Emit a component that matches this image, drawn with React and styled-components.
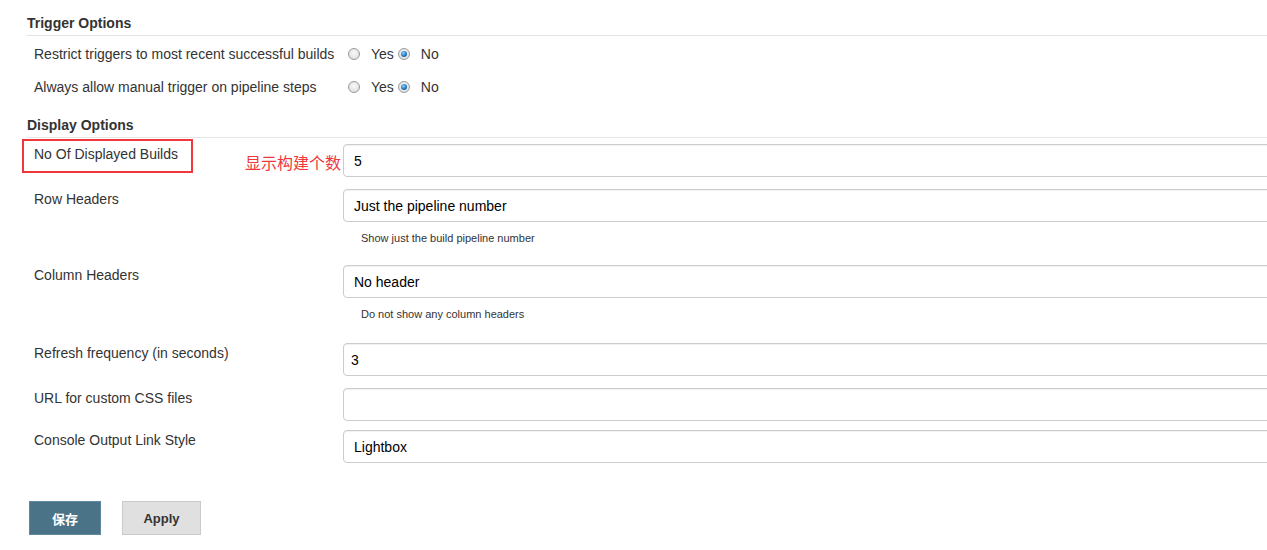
import styled, { createGlobalStyle } from 'styled-components';

const GlobalStyle = createGlobalStyle`
	html, body {
		margin: 0;
		padding: 0;
		background: #fff;
		overflow: hidden;
	}
	body {
		font-family: "Liberation Sans", Arial, sans-serif;
		color: #333;
	}
`;

const Page = styled.div`
	width: 1500px;
	padding-left: 26px;
	box-sizing: border-box;
`;

const SectionTitle = styled.div`
	font-size: 14px;
	font-weight: bold;
	line-height: 16px;
	padding: 15px 0 4px 1px;
	border-bottom: 1px solid #e5e5e5;
	color: #333;
`;

const RadioRow = styled.div`
	display: grid;
	grid-template-columns: 317px auto;
	align-items: center;
	height: 31px;
	padding-top: 2px;
`;

const Label = styled.div`
	position: relative;
	font-size: 14px;
	line-height: 16px;
	padding-left: 8px;
	padding-top: ${({ $top }) => $top || 0}px;
	white-space: nowrap;
`;

const RadioGroup = styled.div`
	display: flex;
	align-items: center;
	padding-left: 5px;
	font-size: 14px;
`;

const Radio = styled.span`
	width: 12px;
	height: 12px;
	border-radius: 50%;
	box-sizing: border-box;
	border: 1px solid #9a9a9a;
	background: radial-gradient(circle at 50% 40%, #fafafa 0%, #e2e2e2 70%, #cfcfcf 100%);
	position: relative;
	margin-right: ${({ $mr }) => $mr}px;

	${({ $checked }) =>
		$checked &&
		`
		&::after {
			content: '';
			position: absolute;
			left: 2px;
			top: 2px;
			width: 6px;
			height: 6px;
			border-radius: 50%;
			background: radial-gradient(circle at 40% 35%, #8fd0ff 0%, #1e79c2 55%, #0b3f74 100%);
		}
	`}
`;

const RadioText = styled.span`
	margin-right: ${({ $mr }) => $mr}px;
`;

const FieldRow = styled.div`
	display: grid;
	grid-template-columns: 317px 1fr;
	align-items: start;
	margin-top: ${({ $mt }) => $mt || 0}px;
`;

const Field = styled.div`
	display: flex;
	flex-direction: column;
`;

const Input = styled.div`
	height: 33px;
	box-sizing: border-box;
	border: 1px solid #ccc;
	border-radius: 4px;
	box-shadow: inset 0 1px 1px rgba(0, 0, 0, 0.06);
	font-size: 14px;
	line-height: 32px;
	padding-left: ${({ $pl }) => $pl || 10}px;
	color: #000;
	background: #fff;
`;

const Help = styled.div`
	font-size: 11px;
	line-height: 16px;
	padding: 8px 0 0 18px;
	margin-bottom: ${({ $mb }) => $mb}px;
	color: #333;
`;

const Highlight = styled.div`
	position: absolute;
	left: -4px;
	top: -5px;
	width: 171px;
	height: 34px;
	box-sizing: border-box;
	border: 2px solid #f0383c;
`;

const Note = styled.span`
	position: absolute;
	right: 2px;
	top: 9px;
	font-family: "Noto Sans CJK SC", sans-serif;
	font-size: 16px;
	line-height: 18px;
	color: #f0383c;
`;

const Buttons = styled.div`
	display: flex;
	gap: 21px;
	margin-top: 38px;
	padding-left: 3px;
`;

const Button = styled.button`
	height: 34px;
	min-width: ${({ $w }) => $w}px;
	box-sizing: border-box;
	font-family: "Liberation Sans", "Noto Sans CJK SC", Arial, sans-serif;
	font-size: 13px;
	font-weight: bold;
	border-radius: 0;
	cursor: pointer;
	border: 1px solid ${({ $primary }) => ($primary ? '#5e88a0' : '#cacaca')};
	background: ${({ $primary }) => ($primary ? '#4b7388' : '#e0e0e0')};
	color: ${({ $primary }) => ($primary ? '#fff' : '#333')};
`;

const fields = [
	{ label: 'Row Headers', value: 'Just the pipeline number', help: 'Show just the build pipeline number', mb: 19, mt: 12 },
	{ label: 'Column Headers', value: 'No header', help: 'Do not show any column headers', mb: 21 },
	{ label: 'Refresh frequency (in seconds)', value: '3', pl: 7 },
	{ label: 'URL for custom CSS files', value: '', mt: 12 },
	{ label: 'Console Output Link Style', value: 'Lightbox', mt: 9 },
];

export default function App() {
	return (
		<Page>
			<GlobalStyle />
			<SectionTitle>Trigger Options</SectionTitle>
			<RadioRow>
				<Label>Restrict triggers to most recent successful builds</Label>
				<RadioGroup>
					<Radio $mr={11} />
					<RadioText $mr={4}>Yes</RadioText>
					<Radio $checked $mr={11} />
					<RadioText>No</RadioText>
				</RadioGroup>
			</RadioRow>
			<RadioRow>
				<Label>Always allow manual trigger on pipeline steps</Label>
				<RadioGroup>
					<Radio $mr={11} />
					<RadioText $mr={4}>Yes</RadioText>
					<Radio $checked $mr={11} />
					<RadioText>No</RadioText>
				</RadioGroup>
			</RadioRow>

			<SectionTitle>Display Options</SectionTitle>
			<FieldRow $mt={6}>
				<Label $top={2}>
					No Of Displayed Builds
					<Highlight />
					<Note>显示构建个数</Note>
				</Label>
				<Field>
					<Input>5</Input>
				</Field>
			</FieldRow>
			{fields.map((f) => (
				<FieldRow key={f.label} $mt={f.mt}>
					<Label $top={2}>{f.label}</Label>
					<Field>
						<Input $pl={f.pl}>{f.value}</Input>
						{f.help && <Help $mb={f.mb}>{f.help}</Help>}
					</Field>
				</FieldRow>
			))}

			<Buttons>
				<Button $primary $w={72}>保存</Button>
				<Button $w={79}>Apply</Button>
			</Buttons>
		</Page>
	);
}
